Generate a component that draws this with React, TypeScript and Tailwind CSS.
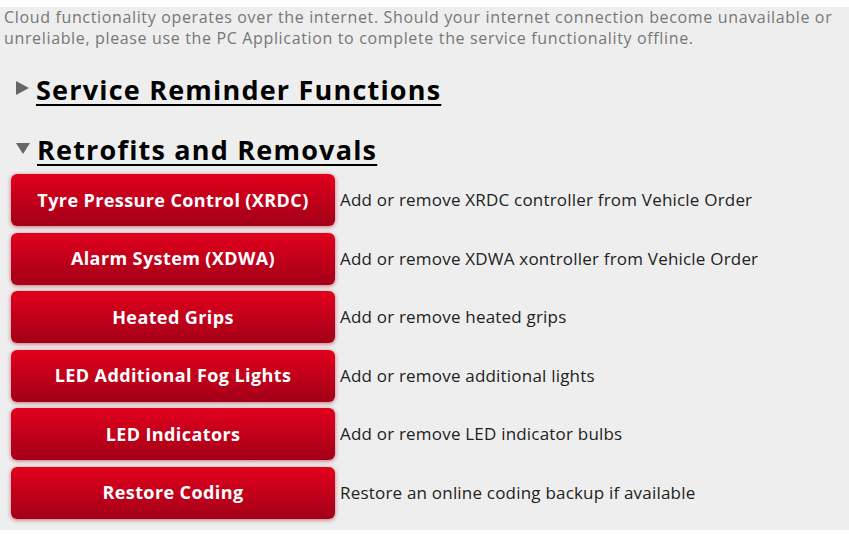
import { ReactNode } from "react";

const retrofits = [
  { label: "Tyre Pressure Control (XRDC)", text: "Add or remove XRDC controller from Vehicle Order" },
  { label: "Alarm System (XDWA)", text: "Add or remove XDWA xontroller from Vehicle Order" },
  { label: "Heated Grips", text: "Add or remove heated grips" },
  { label: "LED Additional Fog Lights", text: "Add or remove additional lights" },
  { label: "LED Indicators", text: "Add or remove LED indicator bulbs" },
  { label: "Restore Coding", text: "Restore an online coding backup if available" },
];

const SectionHeading = ({ open, children }: { open: boolean; children: ReactNode }) => (
  <div className="flex items-center gap-[7px] pl-[16px]">
    {open ? (
      <svg width="14" height="11" viewBox="0 0 14 11" className="mt-[-3px]">
        <polygon points="0,0 14,0 7,11" fill="#666666" />
      </svg>
    ) : (
      <svg width="13" height="14" viewBox="0 0 13 14" className="mt-[-4px]">
        <polygon points="0,0 13,7 0,14" fill="#666666" />
      </svg>
    )}
    <h2 className="text-[27px] leading-[32px] tracking-[1.2px] font-bold text-black underline underline-offset-[4px] decoration-[2px]">
      {children}
    </h2>
  </div>
);

export default function App() {
  return (
    <div className="min-h-screen bg-white pt-[7px] font-['Open_Sans',sans-serif]">
      <div className="bg-[#eeeeee] h-[523px]">
        <p className="px-[4px] text-[16px] leading-[21px] tracking-[0.65px] text-[#777777]">
          Cloud functionality operates over the internet. Should your internet connection become unavailable or
          unreliable, please use the PC Application to complete the service functionality offline.
        </p>

        <div className="mt-[25px]">
          <SectionHeading open={false}>Service Reminder Functions</SectionHeading>
        </div>

        <div className="mt-[28px]">
          <SectionHeading open={true}>Retrofits and Removals</SectionHeading>
        </div>

        <div className="mt-[8px] flex flex-col gap-[6.5px] pl-[11px]">
          {retrofits.map((item) => (
            <div key={item.label} className="flex items-center gap-[5px]">
              <button className="w-[324px] h-[52px] rounded-[6px] bg-gradient-to-b from-[#e2001c] to-[#a30018] text-white text-[18px] tracking-[0.4px] font-bold shadow-[0_1px_4px_rgba(160,0,24,0.55)]">
                {item.label}
              </button>
              <span className="text-[17px] tracking-[0.2px] text-[#222222]">{item.text}</span>
            </div>
          ))}
        </div>
      </div>
    </div>
  );
}
